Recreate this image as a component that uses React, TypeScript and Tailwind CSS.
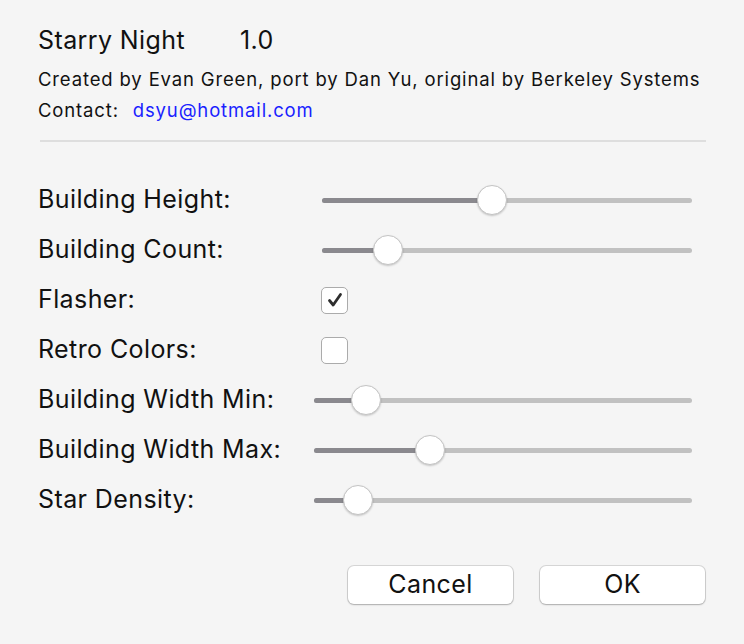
import { useState } from 'react'

interface SliderRow {
  kind: 'slider'
  label: string
  inset: number
  pos: number
}

interface CheckRow {
  kind: 'check'
  label: string
  checked: boolean
}

type Row = SliderRow | CheckRow

const rows: Row[] = [
  { kind: 'slider', label: 'Building Height:', inset: 8, pos: 170 },
  { kind: 'slider', label: 'Building Count:', inset: 8, pos: 66 },
  { kind: 'check', label: 'Flasher:', checked: true },
  { kind: 'check', label: 'Retro Colors:', checked: false },
  { kind: 'slider', label: 'Building Width Min:', inset: 0, pos: 52 },
  { kind: 'slider', label: 'Building Width Max:', inset: 0, pos: 116 },
  { kind: 'slider', label: 'Star Density:', inset: 0, pos: 44 },
]

function Slider({ pos, inset }: { pos: number; inset: number }) {
  return (
    <div className={`flex-1 flex items-center h-[30px] ${inset ? 'ml-2' : ''}`}>
      <div className="relative w-full h-[5px] rounded-full bg-[#c1c1c1]">
        <div className="h-full rounded-full bg-[#8a898e]" style={{ width: pos }} />
        <div
          className="absolute top-1/2 -translate-y-1/2 -translate-x-1/2 w-[30px] h-[30px] rounded-full bg-white border border-[#c4c4c4] shadow-[0_1px_2px_rgba(0,0,0,0.2)]"
          style={{ left: pos }}
        />
      </div>
    </div>
  )
}

function Checkbox({ checked }: { checked: boolean }) {
  const [on, setOn] = useState(checked)
  return (
    <button
      onClick={() => setOn(!on)}
      className="w-[27px] h-[27px] ml-[7px] rounded-[5px] bg-white border border-[#ababab] flex items-center justify-center"
    >
      {on && (
        <svg width="18" height="18" viewBox="0 0 18 18">
          <path d="M3.5 9.5 L7.2 14 L14.5 3.5" fill="none" stroke="#2e2e2e" strokeWidth="2.8" strokeLinecap="round" strokeLinejoin="round" />
        </svg>
      )}
    </button>
  )
}

export default function App() {
  return (
    <div className="w-[744px] h-[644px] bg-[#f5f5f5] text-[#111] font-['Inter',sans-serif] px-[38px] pt-[25px]">
      <div className="flex items-center h-8 text-[25px] tracking-[0.4px]">
        <span className="w-[202px]">Starry Night</span>
        <span>1.0</span>
      </div>
      <div className="h-[30px] mt-[8px] flex items-center text-[18.5px] tracking-[0.85px] whitespace-nowrap">
        Created by Evan Green, port by Dan Yu, original by Berkeley Systems
      </div>
      <div className="h-[30px] mt-[1px] flex items-center text-[18.5px] tracking-[0.85px]">
        Contact:
        <span className="ml-[14px] text-[#1a1fff]">dsyu@hotmail.com</span>
      </div>
      <div className="mt-[14px] ml-[2px] border-t-2 border-[#dedede]" />
      <div className="mt-[33px] flex flex-col">
        {rows.map((row) => (
          <div key={row.label} className="h-[50px] flex items-center">
            <div className="w-[276px] text-[25px] tracking-[0.4px]">{row.label}</div>
            {row.kind === 'slider' ? (
              <div className="flex-1 flex pr-[14px]">
                <Slider pos={row.pos} inset={row.inset} />
              </div>
            ) : (
              <Checkbox checked={row.checked} />
            )}
          </div>
        ))}
      </div>
      <div className="mt-[41px] flex justify-end gap-[27px] pr-[1px]">
        <button className="w-[165px] h-[38px] rounded-[6px] bg-white text-[25px] tracking-[0.4px] shadow-[0_0_0_1px_rgba(0,0,0,0.12),0_1px_2px_rgba(0,0,0,0.2)]">
          Cancel
        </button>
        <button className="w-[165px] h-[38px] rounded-[6px] bg-white text-[25px] tracking-[0.4px] shadow-[0_0_0_1px_rgba(0,0,0,0.12),0_1px_2px_rgba(0,0,0,0.2)]">
          OK
        </button>
      </div>
    </div>
  )
}
